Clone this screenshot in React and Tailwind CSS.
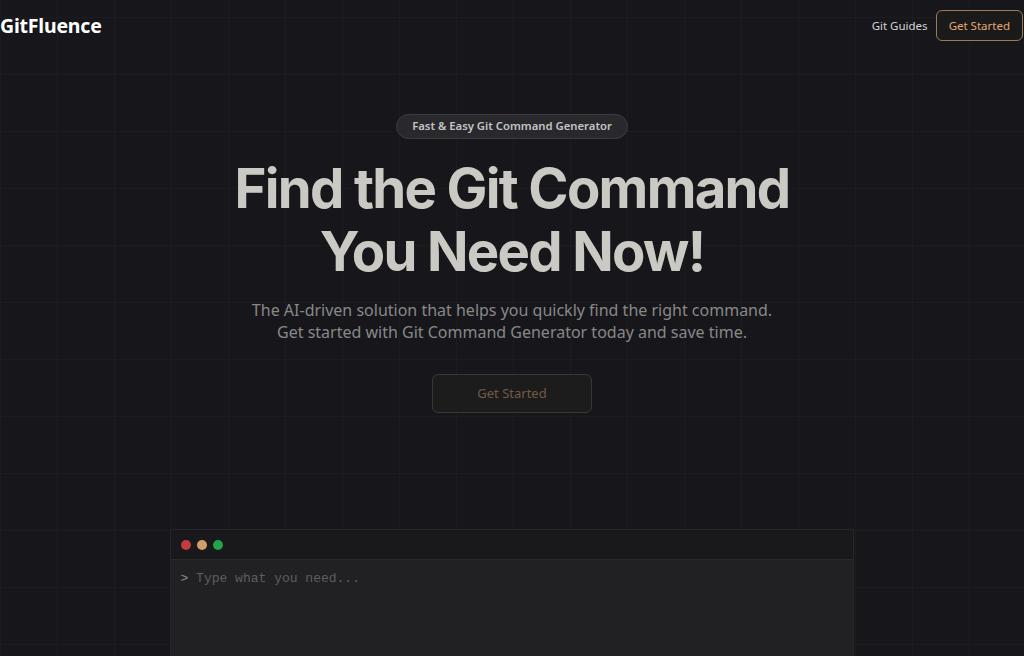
export default function App() {
  return (
    <div
      className="relative h-[656px] w-[1024px] overflow-hidden bg-[#17171b] text-white"
      style={{ fontFamily: '"Noto Sans", "Open Sans", sans-serif' }}
    >
      <div className="pointer-events-none absolute inset-0 bg-[linear-gradient(to_right,rgba(255,255,255,0.025)_1px,transparent_1px),linear-gradient(to_bottom,rgba(255,255,255,0.025)_1px,transparent_1px)] bg-[size:57px_57px] bg-[position:0px_17px]" />
      <div className="relative flex h-full flex-col">
        <header className="flex h-[51px] items-center justify-between pr-[1px]">
          <div className="text-[19.5px] font-bold tracking-[-0.2px] text-white">GitFluence</div>
          <div className="flex items-center gap-[8px]">
            <span className="text-[11.5px] text-[#d4d4d4]">Git Guides</span>
            <button className="h-[31px] rounded-md border border-[#9c7a55] bg-[#1b1a1a] px-[12px] text-[11.5px] text-[#e3a874]">
              Get Started
            </button>
          </div>
        </header>
        <main className="flex flex-col items-center">
          <div className="mt-[63px] flex h-[25px] items-center rounded-full border border-[#3b3b40] bg-[#29292d] px-[15px] text-[11.3px] font-semibold text-[#c4c4c4]">
            Fast &amp; Easy Git Command Generator
          </div>
          <h1
            className="mt-[18px] text-center text-[54.5px] font-bold leading-[63px] tracking-[-1.7px] text-[#cbc9c4]"
            style={{ fontFamily: 'Inter, "Liberation Sans", sans-serif' }}
          >
            Find the Git Command
            <br />
            You Need Now!
          </h1>
          <p className="mt-[16px] text-center text-[16px] leading-[22px] text-[#888888]">
            The AI-driven solution that helps you quickly find the right command.
            <br />
            Get started with Git Command Generator today and save time.
          </p>
          <button className="mt-[31px] h-[39px] w-[160px] rounded-md border border-[#3a3836] bg-[#1d1c1c] text-[13px] text-[#6f5b45]">
            Get Started
          </button>
        </main>
        <div className="mt-auto flex justify-center">
          <div className="ml-[-1px] h-[127px] w-[684px] border-l border-r border-t border-[#26262a] bg-[#19191c]">
            <div className="flex h-[29px] items-center gap-[6px] px-[10px]">
              <span className="h-[10px] w-[10px] rounded-full bg-[#c43c3f]" />
              <span className="h-[10px] w-[10px] rounded-full bg-[#d39c6d]" />
              <span className="h-[10px] w-[10px] rounded-full bg-[#22a34c]" />
            </div>
            <div
              className="h-full border-t border-[#2a2a2d] bg-[#212123] px-[10px] pt-[9px] text-[13px] text-[#5e5e5e]"
              style={{ fontFamily: '"Liberation Mono", "DejaVu Sans Mono", monospace' }}
            >
              <span className="text-[#8a8a8a]">&gt;</span> Type what you need...
            </div>
          </div>
        </div>
      </div>
    </div>
  );
}
